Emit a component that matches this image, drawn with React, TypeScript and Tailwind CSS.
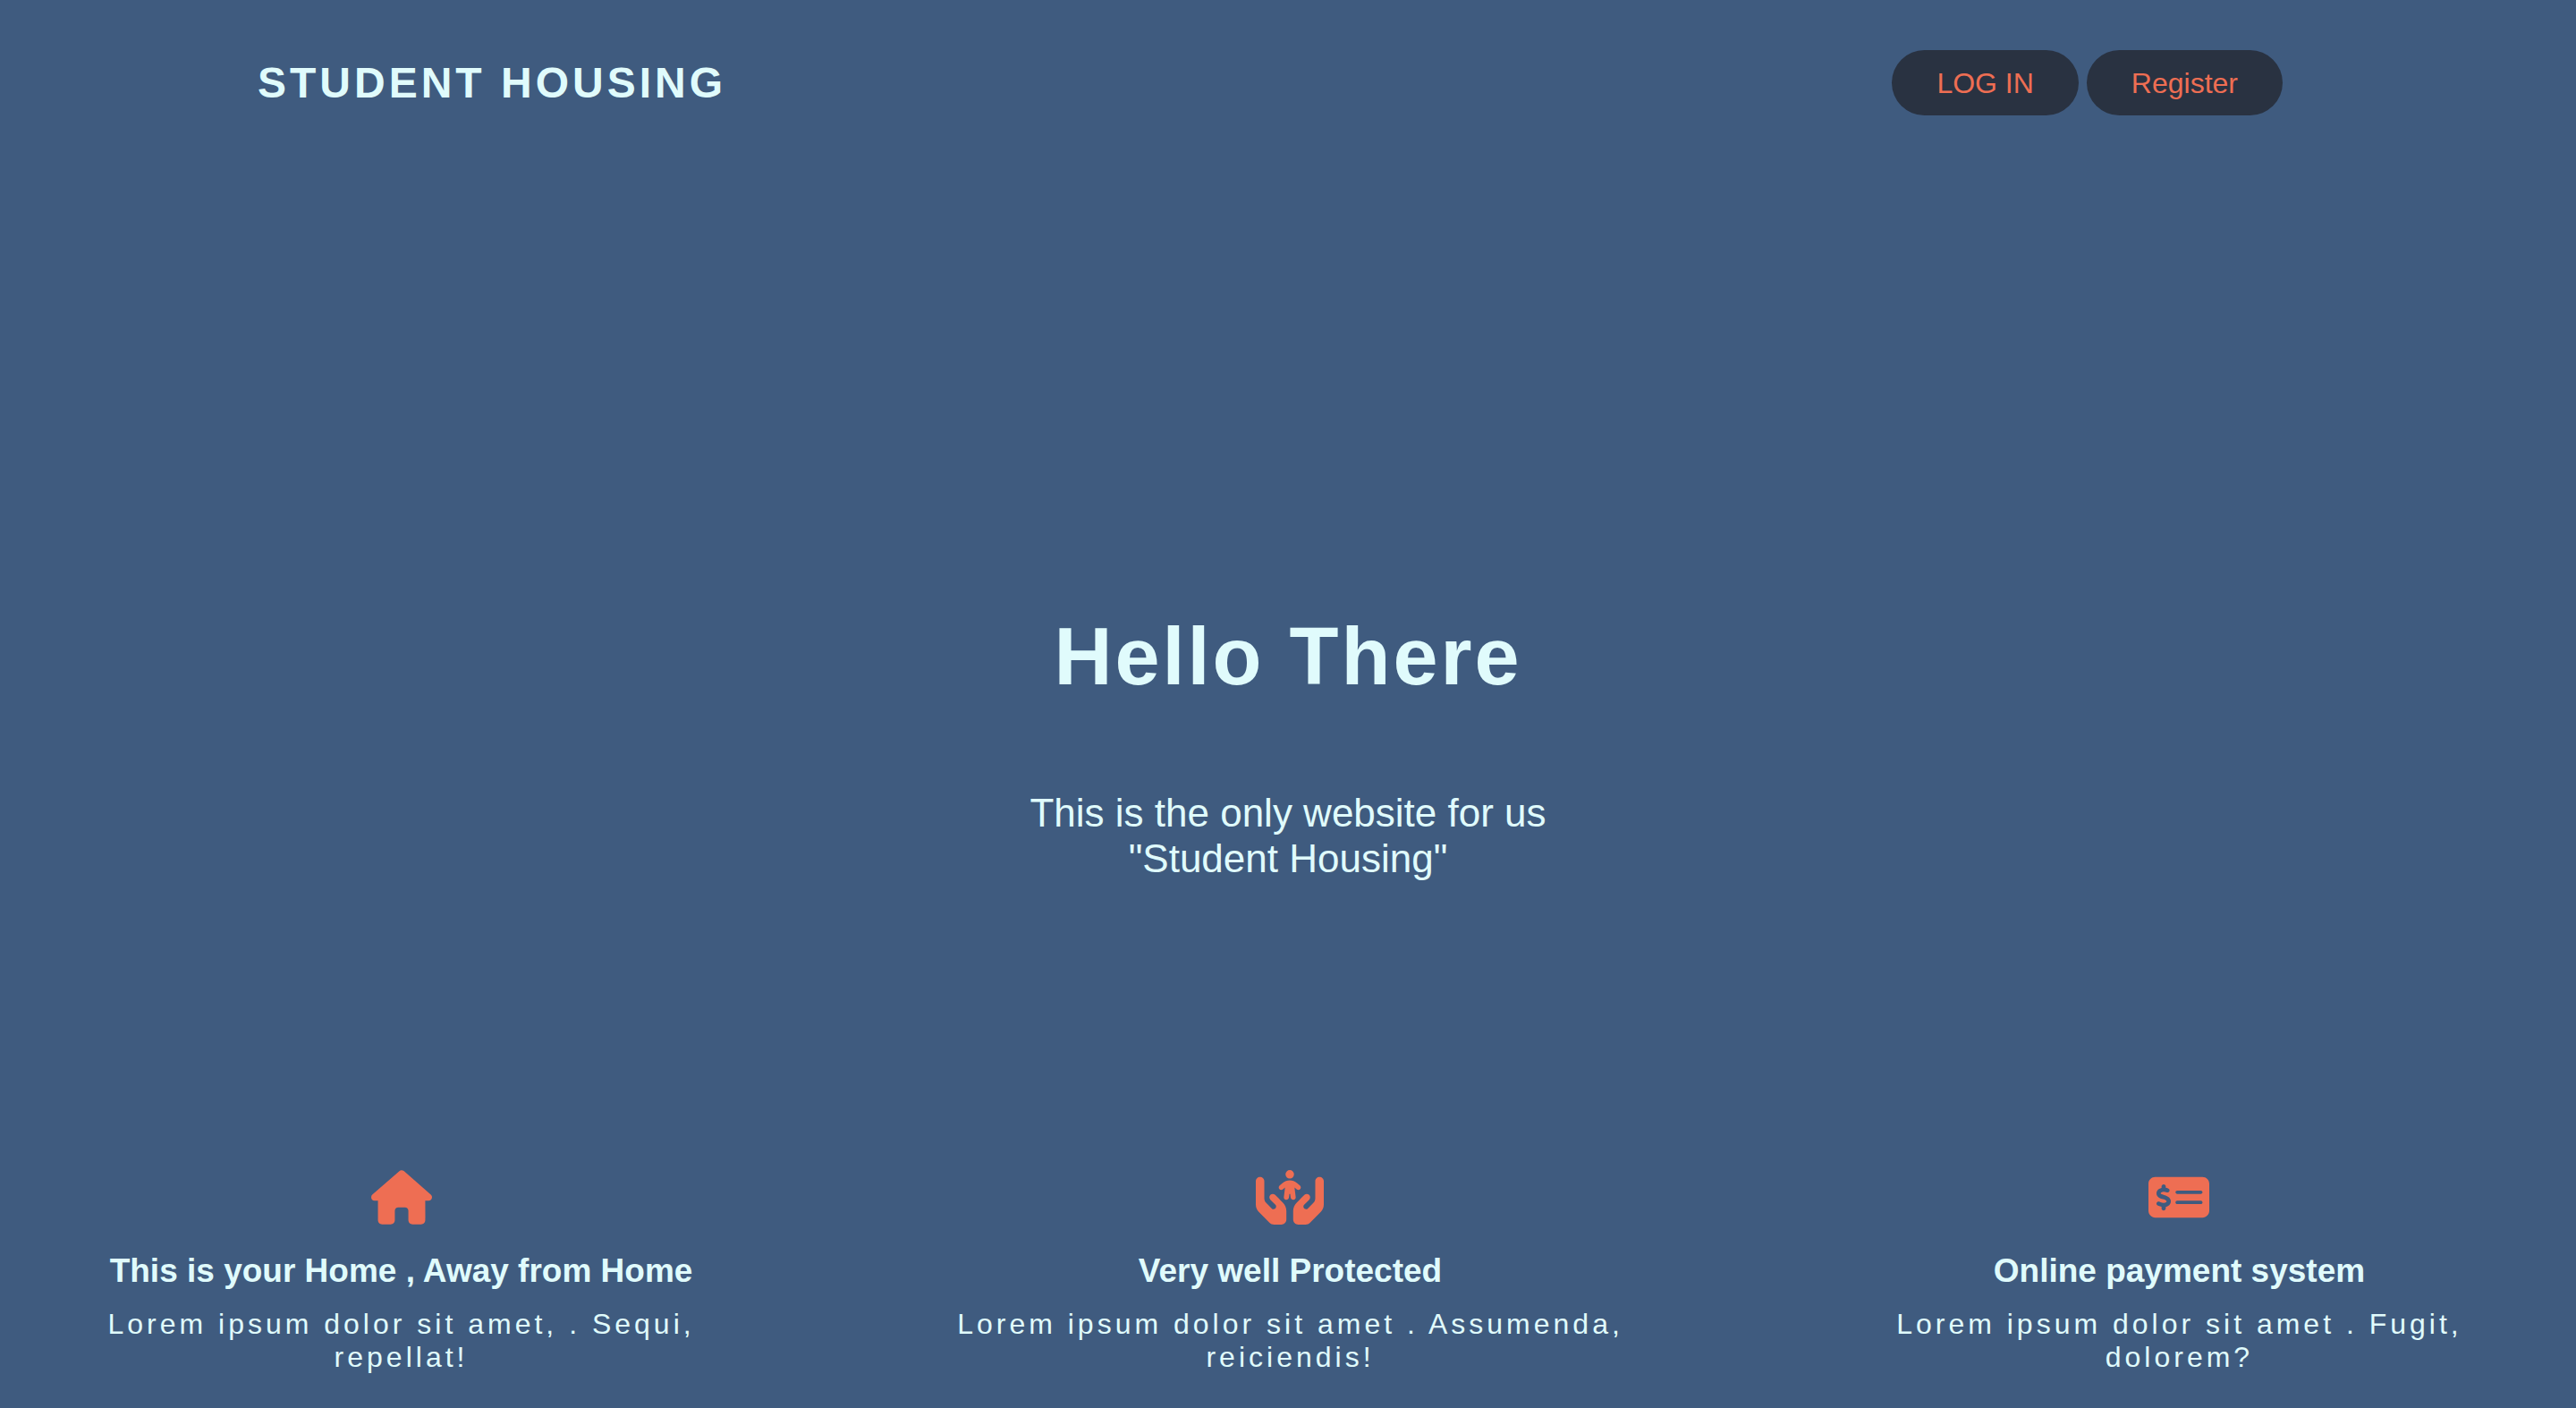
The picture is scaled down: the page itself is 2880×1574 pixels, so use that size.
import React from "react";
import { FaHouse, FaHandsHoldingChild, FaMoneyCheckDollar } from "react-icons/fa6";

const features = [
  { icon: <FaHouse className="h-[61px] w-[68px]" />, title: "This is your Home , Away from Home", body: ["Lorem ipsum dolor sit amet, . Sequi,", "repellat!"] },
  { icon: <FaHandsHoldingChild className="h-[61px] w-[76px]" />, title: "Very well Protected", body: ["Lorem ipsum dolor sit amet . Assumenda,", "reiciendis!"] },
  { icon: <FaMoneyCheckDollar className="h-[61px] w-[68px]" />, title: "Online payment system", body: ["Lorem ipsum dolor sit amet . Fugit,", "dolorem?"] },
];

export default function App() {
  return (
    <div className="flex min-h-screen flex-col bg-[#3f5b7f] font-['Liberation_Sans',Arial,sans-serif] text-[#e0fbfc]">
      <header className="flex items-center justify-between px-[10%] pt-14">
        <h2 className="text-5xl font-bold tracking-[4px]">STUDENT HOUSING</h2>
        <nav className="flex gap-[9px] pr-10 text-[32px] text-[#ee6e53]">
          <button className="h-[73px] rounded-full bg-[#293241] px-[50px]">LOG IN</button>
          <button className="h-[73px] rounded-full bg-[#293241] px-[50px]">Register</button>
        </nav>
      </header>
      <main className="flex flex-1 flex-col items-center justify-center pt-[230px] text-center">
        <h1 className="text-[90px] font-bold leading-[104px] tracking-[3px]">Hello There</h1>
        <p className="mt-[97px] text-[44px] leading-[51px]">
          This is the only website for us
          <br />
          "Student Housing"
        </p>
      </main>
      <section className="flex justify-between pb-[38px] pl-[62px] pr-[57px] text-center">
        {features.map(({ icon, title, body }) => (
          <article key={title} className="flex w-[28%] flex-col items-center">
            <span className="text-[#ee6e53]">{icon}</span>
            <h3 className="mt-[30px] text-[37px] font-bold leading-[44px]">{title}</h3>
            <p className="mt-[19px] text-[32px] leading-[37px] tracking-[4px]">
              {body[0]}
              <br />
              {body[1]}
            </p>
          </article>
        ))}
      </section>
    </div>
  );
}
